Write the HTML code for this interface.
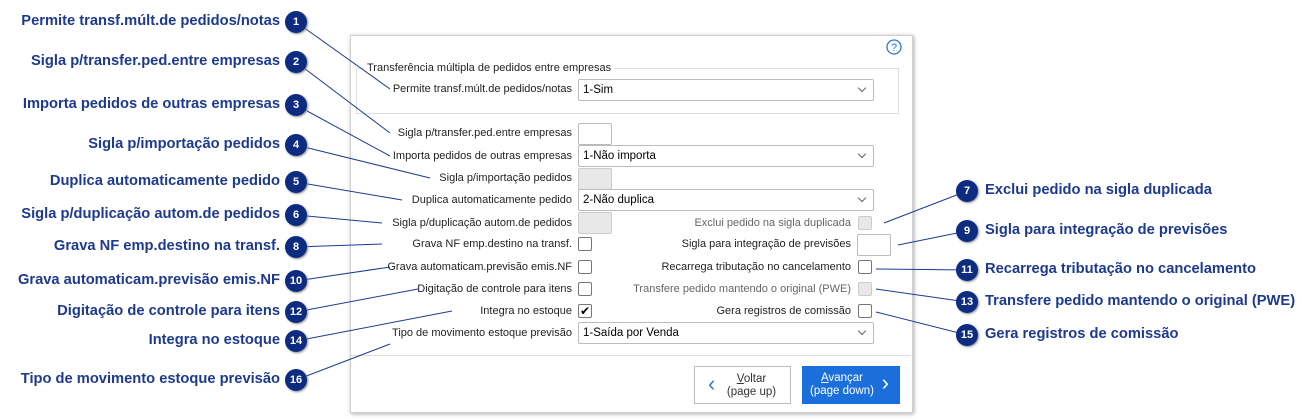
<!DOCTYPE html><html><head><meta charset="utf-8"><style>
body{margin:0;width:1311px;height:419px;background:#fff;position:relative;overflow:hidden;font-family:"Liberation Sans",sans-serif}
.a{position:absolute}
.c{position:absolute;font-weight:bold;font-size:14.7px;color:#1d3a8f;white-space:nowrap}
.cl{text-align:right;right:1031px}
.b{position:absolute;width:22px;height:22px;border-radius:50%;background:#0d2b80;color:#fff;font-size:11px;font-weight:bold;text-align:center;line-height:22px;box-shadow:1px 1px 2px #888;z-index:3}
.dlg{position:absolute;left:350px;top:35px;width:561px;height:376px;border:1px solid #d0d0d0;box-shadow:1px 1px 4px #aaa;background:#fff}
.l{position:absolute;font-size:11px;color:#222;white-space:nowrap;text-align:right}
.g{color:#666}
.dd{position:absolute;left:578px;width:290px;height:20px;border:1px solid #bbb;border-radius:2px;font-size:11.5px;line-height:20px;padding-left:4px;box-sizing:content-box}
.dd:after{content:"";position:absolute;right:8px;top:5px;width:5px;height:5px;border-right:1px solid #666;border-bottom:1px solid #666;transform:rotate(45deg)}
.bx{position:absolute;width:32px;height:20px;border:1px solid #bbb;border-radius:2px}
.ck{position:absolute;width:12px;height:12px;border:1px solid #777;border-radius:2px;background:#fff}
.dis{background:#e8e8e8;border-color:#ccc}
</style></head><body>
<div class="dlg"></div>
<svg class="a" style="left:885px;top:38px" width="18" height="18"><circle cx="9" cy="9" r="7" stroke="#2b7ad6" fill="none" stroke-width="1.3"/><text x="9" y="13" font-size="11" text-anchor="middle" fill="#2b7ad6" font-family="Liberation Sans">?</text></svg>
<div class="a" style="left:356px;top:68px;width:541px;height:44px;border:1px solid #ddd"></div>
<div class="l" style="left:364px;top:62px;background:#fff;padding:0 3px">Transferência múltipla de pedidos entre empresas</div>
<div class="l" style="right:739px;top:83px">Permite transf.múlt.de pedidos/notas</div><div class="dd" style="top:79px">1-Sim</div>
<div class="l" style="right:739px;top:127px">Sigla p/transfer.ped.entre empresas</div><div class="bx" style="left:578px;top:123px"></div>
<div class="l" style="right:739px;top:150px">Importa pedidos de outras empresas</div><div class="dd" style="top:145px">1-Não importa</div>
<div class="l" style="right:739px;top:172px">Sigla p/importação pedidos</div><div class="bx dis" style="left:578px;top:168px"></div>
<div class="l" style="right:739px;top:194px">Duplica automaticamente pedido</div><div class="dd" style="top:189px">2-Não duplica</div>
<div class="l" style="right:739px;top:217px">Sigla p/duplicação autom.de pedidos</div><div class="bx dis" style="left:578px;top:212px"></div>
<div class="l" style="right:739px;top:238px">Grava NF emp.destino na transf.</div><div class="ck" style="left:578px;top:237px"></div>
<div class="l" style="right:739px;top:261px">Grava automaticam.previsão emis.NF</div><div class="ck" style="left:578px;top:260px"></div>
<div class="l" style="right:739px;top:283px">Digitação de controle para itens</div><div class="ck" style="left:578px;top:282px"></div>
<div class="l" style="right:739px;top:305px">Integra no estoque</div><div class="ck" style="left:578px;top:304px;font-size:12px;line-height:12px;text-align:center">✔</div>
<div class="l" style="right:739px;top:327px">Tipo de movimento estoque previsão</div><div class="dd" style="top:322px">1-Saída por Venda</div>
<div class="l g" style="right:460px;top:217px">Exclui pedido na sigla duplicada</div><div class="ck dis" style="left:858px;top:216px"></div>
<div class="l" style="right:460px;top:238px">Sigla para integração de previsões</div><div class="bx" style="left:857px;top:234px"></div>
<div class="l" style="right:460px;top:261px">Recarrega tributação no cancelamento</div><div class="ck" style="left:858px;top:260px"></div>
<div class="l g" style="right:460px;top:283px">Transfere pedido mantendo o original (PWE)</div><div class="ck dis" style="left:858px;top:282px"></div>
<div class="l" style="right:460px;top:305px">Gera registros de comissão</div><div class="ck" style="left:858px;top:304px"></div>
<div class="a" style="left:351px;top:355px;width:560px;height:1px;background:#ddd"></div>
<div class="a" style="left:694px;top:366px;width:97px;height:38px;border:1px solid #bbb;box-sizing:border-box;font-size:11.5px;color:#333;text-align:center;line-height:13px;padding-top:6px;padding-left:18px"><u>V</u>oltar<br>(page up)<span style="position:absolute;left:13px;top:6px;font-size:22px;color:#2b7ad6;line-height:22px">‹</span></div>
<div class="a" style="left:802px;top:366px;width:98px;height:38px;background:#1b6fdc;box-sizing:border-box;font-size:11.5px;color:#fff;text-align:center;line-height:13px;padding-top:6px;padding-right:18px"><u>A</u>vançar<br>(page down)<span style="position:absolute;right:11px;top:6px;font-size:22px;line-height:22px">›</span></div>
<svg class="a" style="left:0;top:0;z-index:2" width="1311" height="419"><g stroke="#1c3b94" stroke-width="1" fill="none">
<line x1="296" y1="22" x2="390" y2="89"/><line x1="296" y1="62" x2="390" y2="133"/><line x1="296" y1="105" x2="390" y2="156"/><line x1="296" y1="145" x2="430" y2="178"/><line x1="296" y1="182" x2="402" y2="200"/><line x1="296" y1="215" x2="382" y2="223"/><line x1="296" y1="247" x2="382" y2="244"/><line x1="296" y1="281" x2="390" y2="267"/><line x1="296" y1="312" x2="418" y2="289"/><line x1="296" y1="341" x2="452" y2="311"/><line x1="296" y1="380" x2="390" y2="344"/>
<line x1="967" y1="191" x2="884" y2="223"/><line x1="967" y1="231" x2="898" y2="245"/><line x1="967" y1="270" x2="876" y2="269"/><line x1="967" y1="302" x2="876" y2="289"/><line x1="967" y1="335" x2="876" y2="312"/></g></svg>
<div class="c cl" style="top:13px">Permite transf.múlt.de pedidos/notas</div><div class="b" style="left:285px;top:11px">1</div>
<div class="c cl" style="top:53px">Sigla p/transfer.ped.entre empresas</div><div class="b" style="left:285px;top:51px">2</div>
<div class="c cl" style="top:96px">Importa pedidos de outras empresas</div><div class="b" style="left:285px;top:94px">3</div>
<div class="c cl" style="top:136px">Sigla p/importação pedidos</div><div class="b" style="left:285px;top:134px">4</div>
<div class="c cl" style="top:173px">Duplica automaticamente pedido</div><div class="b" style="left:285px;top:171px">5</div>
<div class="c cl" style="top:206px">Sigla p/duplicação autom.de pedidos</div><div class="b" style="left:285px;top:204px">6</div>
<div class="c cl" style="top:238px">Grava NF emp.destino na transf.</div><div class="b" style="left:285px;top:236px">8</div>
<div class="c cl" style="top:272px">Grava automaticam.previsão emis.NF</div><div class="b" style="left:285px;top:270px">10</div>
<div class="c cl" style="top:303px">Digitação de controle para itens</div><div class="b" style="left:285px;top:301px">12</div>
<div class="c cl" style="top:332px">Integra no estoque</div><div class="b" style="left:285px;top:330px">14</div>
<div class="c cl" style="top:371px">Tipo de movimento estoque previsão</div><div class="b" style="left:285px;top:369px">16</div>
<div class="b" style="left:956px;top:180px">7</div><div class="c" style="left:985px;top:182px">Exclui pedido na sigla duplicada</div>
<div class="b" style="left:956px;top:220px">9</div><div class="c" style="left:985px;top:222px">Sigla para integração de previsões</div>
<div class="b" style="left:956px;top:259px">11</div><div class="c" style="left:985px;top:261px">Recarrega tributação no cancelamento</div>
<div class="b" style="left:956px;top:291px">13</div><div class="c" style="left:985px;top:293px">Transfere pedido mantendo o original (PWE)</div>
<div class="b" style="left:956px;top:324px">15</div><div class="c" style="left:985px;top:326px">Gera registros de comissão</div>
</body></html>
